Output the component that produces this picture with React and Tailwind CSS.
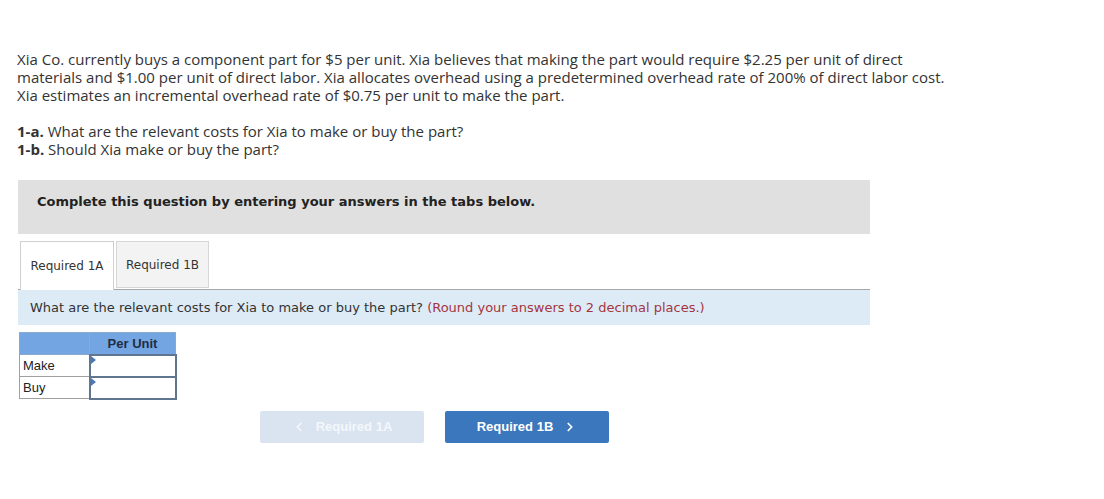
import { ChevronLeft, ChevronRight } from "lucide-react";

export default function App() {
  return (
    <div className="w-[1104px] h-[499px] bg-white pt-[50px] pl-[17px]" style={{ fontFamily: '"Open Sans", Lato, sans-serif' }}>
      {/* Problem text */}
      <div className="text-[15px] leading-[18px] text-[#333] whitespace-nowrap">
        <p>Xia Co. currently buys a component part for $5 per unit. Xia believes that making the part would require $2.25 per unit of direct</p>
        <p>materials and $1.00 per unit of direct labor. Xia allocates overhead using a predetermined overhead rate of 200% of direct labor cost.</p>
        <p>Xia estimates an incremental overhead rate of $0.75 per unit to make the part.</p>
      </div>
      <div className="mt-[18px] text-[15px] leading-[18px] text-[#333]">
        <p><span className="font-bold">1-a.</span> What are the relevant costs for Xia to make or buy the part?</p>
        <p><span className="font-bold">1-b.</span> Should Xia make or buy the part?</p>
      </div>

      <div className="ml-px w-[852px] mt-[22px]" style={{ fontFamily: '"DejaVu Sans", Verdana, sans-serif' }}>
        {/* Instruction banner */}
        <div className="h-[54px] bg-[#e0e0e0] pt-[13px] pl-[19px] text-[13px] leading-[18px] font-bold text-[#222]">
          Complete this question by entering your answers in the tabs below.
        </div>

        {/* Tabs */}
        <div className="flex mt-[7px] ml-[2px] gap-[2px] text-[12px] text-[#333]">
          <div className="w-[94px] h-[49px] bg-white border border-b-0 border-[#cfcfcf] flex items-center justify-center relative z-10 -mb-px">
            Required 1A
          </div>
          <div className="w-[93px] h-[47px] bg-[#f3f3f3] border border-[#d6d6d6] flex items-center justify-center">
            Required 1B
          </div>
        </div>

        {/* Question bar */}
        <div className="h-[36px] bg-[#ddebf7] border-t border-[#a6a6a6] flex items-center pl-[12px] text-[13px] text-[#333]">
          What are the relevant costs for Xia to make or buy the part?&nbsp;
          <span className="text-[#a5353f]">(Round your answers to 2 decimal places.)</span>
        </div>

        {/* Table */}
        <table className="mt-[7px] ml-px border-collapse text-[13px] text-[#222]" style={{ fontFamily: '"Liberation Sans", Arial, sans-serif' }}>
          <tbody>
            <tr className="h-[22px] bg-[#72a5e1]">
              <td className="w-[70px] border border-[#8aa9cc]"></td>
              <td className="w-[86px] border border-[#8aa9cc] text-center font-bold text-[#1f2e45]">Per Unit</td>
            </tr>
            {["Make", "Buy"].map((r) => (
              <tr key={r} className="h-[22px]">
                <td className="border border-[#a0a0a0] pl-[3px]">{r}</td>
                <td className="border-2 border-[#5f7590] relative p-0">
                  <span className="absolute left-0 top-0 w-0 h-0 border-y-[4px] border-y-transparent border-l-[5px] border-l-[#4a78b8]" />
                </td>
              </tr>
            ))}
          </tbody>
        </table>

        {/* Nav buttons */}
        <div className="flex gap-[21px] ml-[242px] mt-[11px]" style={{ fontFamily: '"Liberation Sans", Arial, sans-serif' }}>
          <div className="w-[164px] h-[32px] rounded-[2px] bg-[#d9e4f0] text-[#f4f7fb] font-bold text-[13px] flex items-center justify-center gap-[10px]">
            <ChevronLeft size={14} strokeWidth={3} />
            <span>Required 1A</span>
          </div>
          <div className="w-[164px] h-[32px] rounded-[2px] bg-[#3b77bc] text-white font-bold text-[13px] flex items-center justify-center gap-[10px]">
            <span>Required 1B</span>
            <ChevronRight size={14} strokeWidth={3} />
          </div>
        </div>
      </div>
    </div>
  );
}
